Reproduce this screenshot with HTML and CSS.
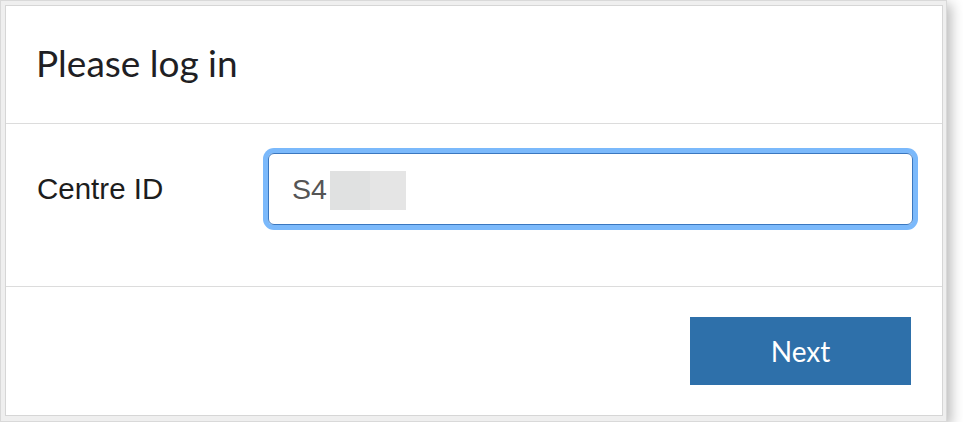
FILE: index.html
```html
<!DOCTYPE html>
<html lang="en">
<head>
<meta charset="utf-8">
<title>Please log in</title>
<link rel="stylesheet" href="styles.css">
</head>
<body>
<div class="frame">
  <div class="panel">
    <div class="panel-header">
      <h1 class="title">Please log in</h1>
    </div>
    <div class="panel-body">
      <label class="label" for="centre">Centre ID</label>
      <div class="field" id="centre">S4<span class="mask mask-a"></span><span class="mask mask-b"></span></div>
    </div>
    <div class="panel-footer">
      <button class="btn-next" type="button">Next</button>
    </div>
  </div>
</div>
</body>
</html>
```
FILE: styles.css
```css
html, body {
  margin: 0;
  padding: 0;
  background: #ffffff;
}

.frame {
  box-sizing: border-box;
  width: 947px;
  height: 422px;
  border: 1px solid #d9d9d9;
  background: #efefef;
  padding: 4px 3px 5px 4px;
  box-shadow: 4px 4px 12px rgba(0, 0, 0, 0.28);
}

.panel {
  box-sizing: border-box;
  height: 100%;
  border: 1px solid #d6d6d6;
  background: #ffffff;
  display: flex;
  flex-direction: column;
}

.panel-header {
  box-sizing: border-box;
  height: 118px;
  border-bottom: 1px solid #dcdcdc;
  display: flex;
  align-items: center;
  padding: 0 0 2px 30px;
}

.title {
  margin: 0;
  font-family: Lato, "Noto Sans", sans-serif;
  font-weight: 400;
  font-size: 37px;
  color: #1f1f24;
  line-height: 1.2;
}

.panel-body {
  box-sizing: border-box;
  height: 163px;
  border-bottom: 1px solid #dcdcdc;
  display: grid;
  grid-template-columns: 231px 1fr;
  align-items: start;
  padding: 29px 29px 0 31px;
}

.label {
  font-family: "Liberation Sans", Arial, sans-serif;
  font-size: 29.5px;
  color: #1d1d1d;
  line-height: 72px;
}

.field {
  box-sizing: border-box;
  height: 72px;
  border: 1px solid #3a77bf;
  border-radius: 6px;
  box-shadow: 0 0 0 5px #7bb9fb;
  padding: 0 23px;
  display: flex;
  align-items: center;
  font-family: "Liberation Sans", Arial, sans-serif;
  font-size: 28.5px;
  color: #555555;
}

.mask {
  display: inline-block;
  height: 39px;
  margin-top: 2px;
}

.mask-a {
  width: 40px;
  margin-left: 3px;
  background: #e0e1e1;
}

.mask-b {
  width: 36px;
  background: #e5e5e5;
}

.panel-footer {
  flex: 1;
  display: flex;
  justify-content: flex-end;
  align-items: center;
  padding: 0 31px 0 0;
}

.btn-next {
  width: 221px;
  height: 68px;
  border: none;
  border-radius: 0;
  background: #2e70aa;
  color: #ffffff;
  font-family: Lato, "Noto Sans", sans-serif;
  font-size: 28px;
  padding: 0;
  cursor: pointer;
}
```
